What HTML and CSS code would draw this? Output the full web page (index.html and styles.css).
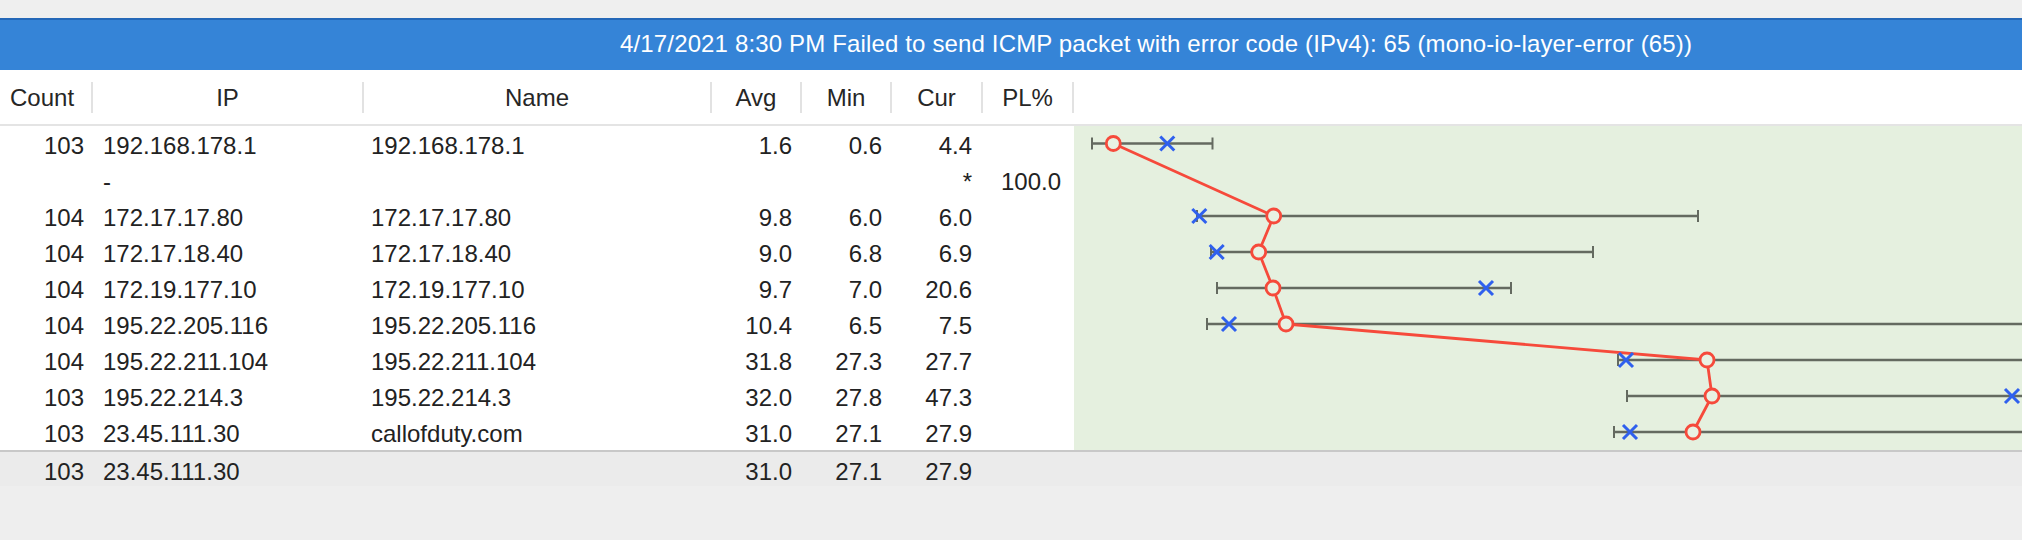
FILE: index.html
```html
<!DOCTYPE html>
<html>
<head>
<meta charset="utf-8">
<link rel="stylesheet" href="styles.css">
</head>
<body>
<div class="topstrip"></div>
<div class="banner"><span class="banner-text">4/17/2021 8:30 PM Failed to send ICMP packet with error code (IPv4): 65 (mono-io-layer-error (65))</span></div>
<div class="head">
  <div class="hc hc-count">Count</div>
  <div class="hc">IP</div>
  <div class="hc">Name</div>
  <div class="hc">Avg</div>
  <div class="hc">Min</div>
  <div class="hc">Cur</div>
  <div class="hc">PL%</div>
  <div class="hc hc-graph"></div>
</div>
<div class="body">
  <div class="rows">
    <div class="row"><span class="r">103</span><span>192.168.178.1</span><span>192.168.178.1</span><span class="r">1.6</span><span class="r">0.6</span><span class="r">4.4</span><span class="r"></span></div>
    <div class="row"><span class="r"></span><span>-</span><span></span><span class="r"></span><span class="r"></span><span class="r">*</span><span class="r">100.0</span></div>
    <div class="row"><span class="r">104</span><span>172.17.17.80</span><span>172.17.17.80</span><span class="r">9.8</span><span class="r">6.0</span><span class="r">6.0</span><span class="r"></span></div>
    <div class="row"><span class="r">104</span><span>172.17.18.40</span><span>172.17.18.40</span><span class="r">9.0</span><span class="r">6.8</span><span class="r">6.9</span><span class="r"></span></div>
    <div class="row"><span class="r">104</span><span>172.19.177.10</span><span>172.19.177.10</span><span class="r">9.7</span><span class="r">7.0</span><span class="r">20.6</span><span class="r"></span></div>
    <div class="row"><span class="r">104</span><span>195.22.205.116</span><span>195.22.205.116</span><span class="r">10.4</span><span class="r">6.5</span><span class="r">7.5</span><span class="r"></span></div>
    <div class="row"><span class="r">104</span><span>195.22.211.104</span><span>195.22.211.104</span><span class="r">31.8</span><span class="r">27.3</span><span class="r">27.7</span><span class="r"></span></div>
    <div class="row"><span class="r">103</span><span>195.22.214.3</span><span>195.22.214.3</span><span class="r">32.0</span><span class="r">27.8</span><span class="r">47.3</span><span class="r"></span></div>
    <div class="row"><span class="r">103</span><span>23.45.111.30</span><span>callofduty.com</span><span class="r">31.0</span><span class="r">27.1</span><span class="r">27.9</span><span class="r"></span></div>
  </div>
  <div class="graph">
    <svg width="948" height="324" viewBox="0 0 948 324">
      <g class="rng">
        <line x1="18" y1="17.5" x2="138.5" y2="17.5"/><line x1="18" y1="11.5" x2="18" y2="23.5" class="tick"/><line x1="138.5" y1="11.5" x2="138.5" y2="23.5" class="tick"/>
        <line x1="123" y1="90" x2="624" y2="90"/><line x1="123" y1="84" x2="123" y2="96" class="tick"/><line x1="624" y1="84" x2="624" y2="96" class="tick"/>
        <line x1="137" y1="126" x2="519" y2="126"/><line x1="137" y1="120" x2="137" y2="132" class="tick"/><line x1="519" y1="120" x2="519" y2="132" class="tick"/>
        <line x1="143" y1="162" x2="437" y2="162"/><line x1="143" y1="156" x2="143" y2="168" class="tick"/><line x1="437" y1="156" x2="437" y2="168" class="tick"/>
        <line x1="133" y1="198" x2="948" y2="198"/><line x1="133" y1="192" x2="133" y2="204" class="tick"/>
        <line x1="544" y1="234" x2="948" y2="234"/><line x1="544" y1="228" x2="544" y2="240" class="tick"/>
        <line x1="553" y1="270" x2="948" y2="270"/><line x1="553" y1="264" x2="553" y2="276" class="tick"/>
        <line x1="540" y1="306" x2="948" y2="306"/><line x1="540" y1="300" x2="540" y2="312" class="tick"/>
      </g>
      <polyline class="avg" points="39.3,17.5 199.7,90 184.7,126 199,162 212,198 633,234 638,270 619,306"/>
      <g class="cur">
        <path d="M86.3 10.5 L100.3 24.5 M100.3 10.5 L86.3 24.5"/>
        <path d="M118.3 83 L132.3 97 M132.3 83 L118.3 97"/>
        <path d="M135.7 119 L149.7 133 M149.7 119 L135.7 133"/>
        <path d="M405 155 L419 169 M419 155 L405 169"/>
        <path d="M148 191 L162 205 M162 191 L148 205"/>
        <path d="M545 227 L559 241 M559 227 L545 241"/>
        <path d="M931 263 L945 277 M945 263 L931 277"/>
        <path d="M549 299 L563 313 M563 299 L549 313"/>
      </g>
      <g class="dot">
        <circle cx="39.3" cy="17.5" r="7"/>
        <circle cx="199.7" cy="90" r="7"/>
        <circle cx="184.7" cy="126" r="7"/>
        <circle cx="199" cy="162" r="7"/>
        <circle cx="212" cy="198" r="7"/>
        <circle cx="633" cy="234" r="7"/>
        <circle cx="638" cy="270" r="7"/>
        <circle cx="619" cy="306" r="7"/>
      </g>
    </svg>
  </div>
</div>
<div class="summary">
  <div class="row"><span class="r">103</span><span>23.45.111.30</span><span></span><span class="r">31.0</span><span class="r">27.1</span><span class="r">27.9</span><span class="r"></span></div>
</div>
<div class="rest"></div>
</body>
</html>
```
FILE: styles.css
```css
html, body {
  margin: 0;
  padding: 0;
  background: #eeeeee;
  width: 2022px;
  height: 540px;
  overflow: hidden;
  font-family: "Liberation Sans", Arial, Helvetica, sans-serif;
  font-size: 24px;
  color: #222222;
}
.topstrip {
  height: 18px;
  background: #efefef;
}
.banner {
  height: 50px;
  border-top: 2px solid #2468b8;
  background: #3584d7;
  color: #ffffff;
  display: flex;
  align-items: center;
  padding-left: 620px;
  white-space: nowrap;
  letter-spacing: 0.15px;
}
.banner-text {
  position: relative;
  top: -1px;
}
.head {
  display: grid;
  grid-template-columns: 93px 271px 348px 90px 90px 91px 91px 1fr;
  height: 54px;
  background: #ffffff;
  border-bottom: 2px solid #e4e4e4;
  color: #262626;
}
.hc {
  margin: 12px 0 11px;
  border-right: 2px solid #e2e2e2;
  display: flex;
  align-items: center;
  justify-content: center;
}
.hc-count {
  justify-content: flex-start;
  padding-left: 10px;
}
.hc-graph {
  border-right: none;
}
.body {
  display: flex;
  height: 324px;
  background: #ffffff;
}
.rows {
  width: 1074px;
  flex: none;
}
.row {
  display: grid;
  grid-template-columns: 93px 271px 348px 90px 90px 91px 90px;
  height: 36px;
  align-items: center;
  white-space: nowrap;
}
.row span {
  padding-left: 10px;
  line-height: 36px;
  position: relative;
  top: 2px;
}
.row span:nth-child(3) {
  padding-left: 7px;
}
.row span.r {
  text-align: right;
  padding-left: 0;
  padding-right: 10px;
}
.row span:nth-child(1) {
  padding-right: 9px;
}
.row span:nth-child(6) {
  padding-right: 11px;
}
.row span:nth-child(7) {
  padding-right: 12px;
}
.graph {
  flex: 1;
  background: #e5f0df;
  overflow: hidden;
}
.graph svg {
  display: block;
}
.rng line {
  stroke: #646a60;
  stroke-width: 2.5;
}
.rng line.tick {
  stroke-width: 2;
}
.avg {
  fill: none;
  stroke: #f64a3b;
  stroke-width: 2.8;
  stroke-linejoin: round;
}
.cur path {
  stroke: #2f60ee;
  stroke-width: 3;
  fill: none;
}
.dot circle {
  fill: #e8f2e3;
  stroke: #f64a3b;
  stroke-width: 2.8;
}
.summary {
  border-top: 2px solid #c8c8c8;
  background: #ebebeb;
  height: 34px;
}
.summary .row {
  height: 34px;
}
.summary .row span {
  line-height: 34px;
  top: 3px;
}
.rest {
  height: 54px;
  background: #eeeeee;
}
```
